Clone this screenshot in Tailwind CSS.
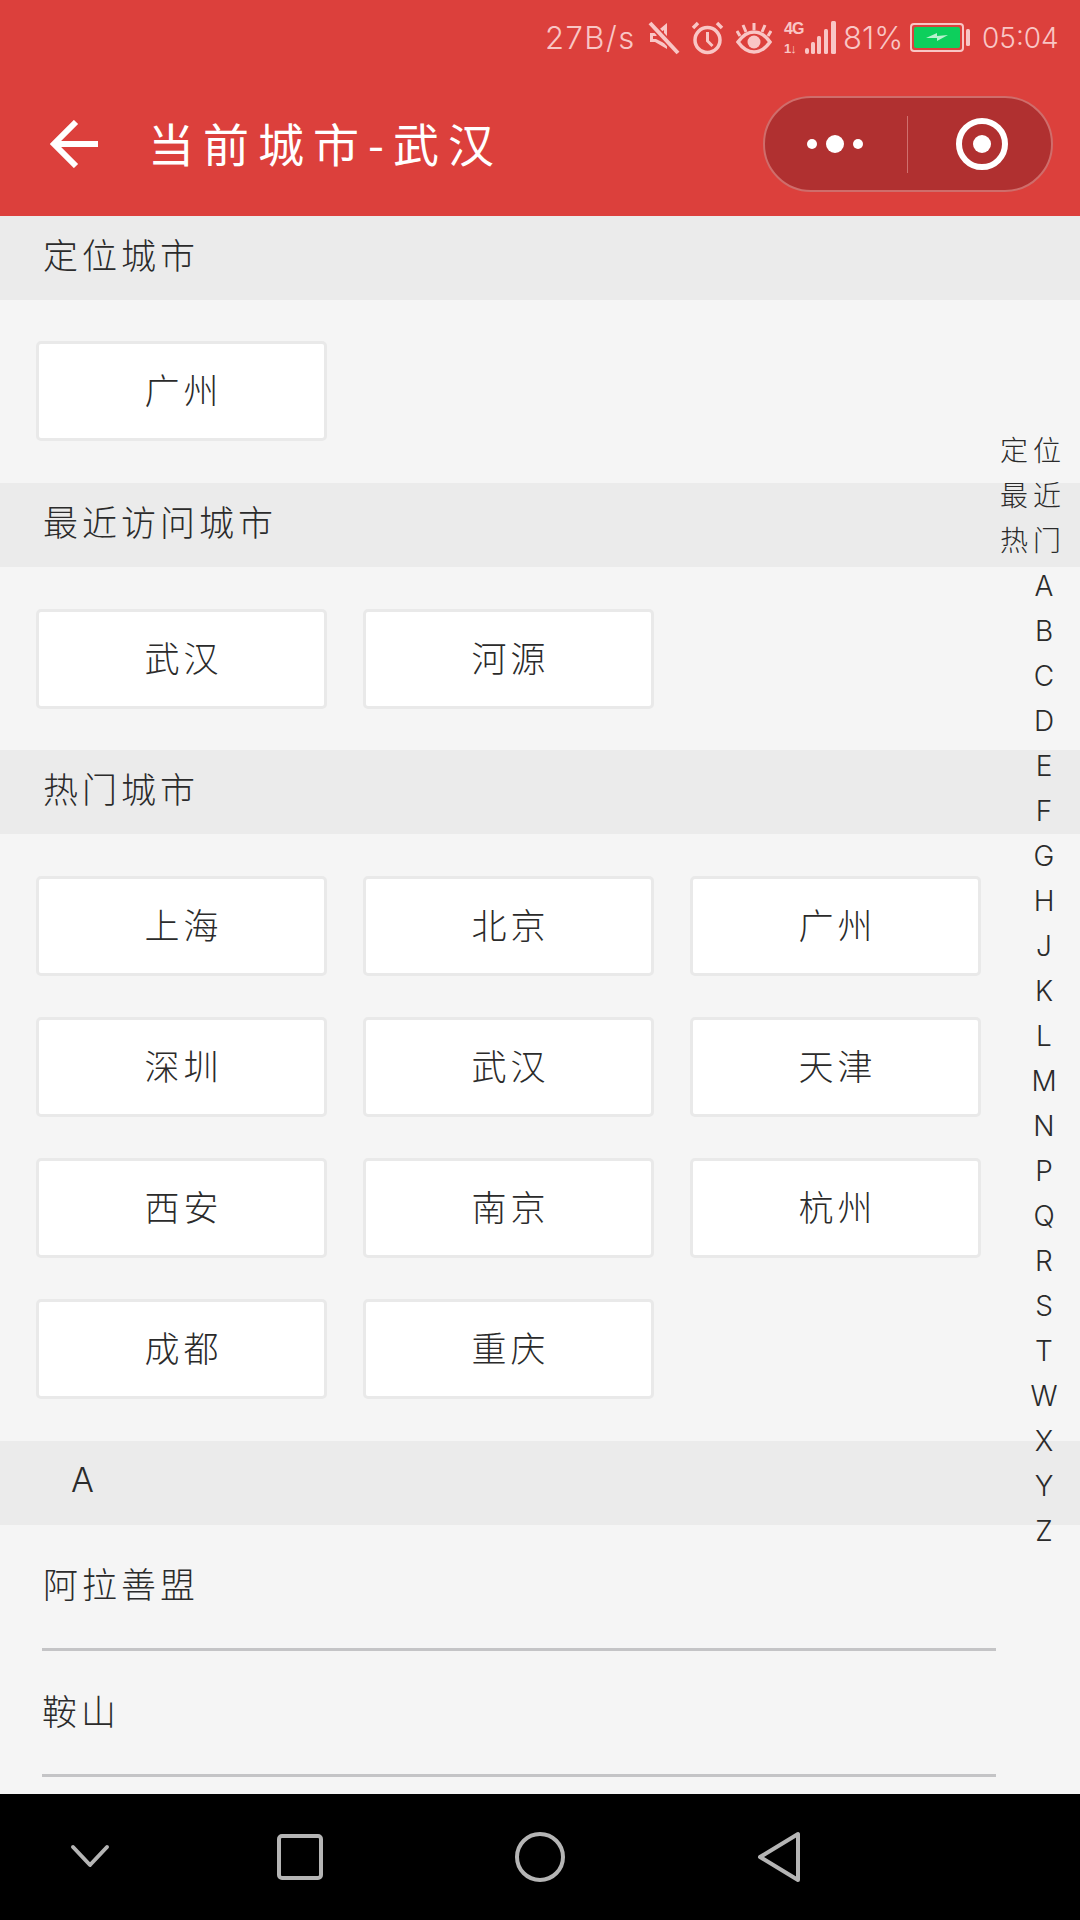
<!DOCTYPE html>
<html lang="zh">
<head>
<meta charset="utf-8">
<script src="https://cdn.jsdelivr.net/npm/@tailwindcss/browser@4"></script>
</head>
<body class="m-0">
<div class="relative w-[1080px] h-[1920px] overflow-hidden flex flex-col bg-[#f5f5f5] text-[#2b2b2b] font-['Noto_Sans_CJK_SC','Noto_Sans',sans-serif] font-light">
  <header class="h-[216px] shrink-0 bg-[#dc403c] flex flex-col">
    <div class="h-[72px] shrink-0 flex items-center pl-[545px] pt-[3px] text-[#f9c6c5] text-[30px] font-['Inter',sans-serif] font-light leading-none">
      <span class="w-[92px] text-[31px] tracking-[1.5px] whitespace-nowrap">27B/s</span>
      <svg class="ml-[11px] w-[32px] h-[34px]" viewBox="0 0 32 34" fill="none"><path d="M2 12h5L19 2v26L7 21H2z" fill="#f9c6c5"/><path d="M5 15h3l8-6v13l-8-4H5z" fill="#dc403c"/><path d="M1 1l30 32" stroke="#dc403c" stroke-width="7"/><path d="M2 2l28 30" stroke="#f9c6c5" stroke-width="4"/></svg>
      <svg class="ml-[11px] w-[33px] h-[34px]" viewBox="0 0 33 34" fill="none" stroke="#f9c6c5"><circle cx="16.500" cy="19" r="12.500" stroke-width="3.500"/><path d="M16.500 11v9l5 5" stroke-width="3"/><path d="M2 7l5-5M31 7l-5-5" stroke-width="3.500"/></svg>
      <svg class="ml-[12px] w-[36px] h-[34px]" viewBox="0 0 36 34" fill="none" stroke="#f9c6c5"><path d="M2 21c5-7 10-10 16-10s11 3 16 10c-5 7-10 10-16 10S7 28 2 21z" stroke-width="3.500"/><circle cx="18" cy="21" r="6.500" fill="#f9c6c5" stroke="none"/><path d="M18 9V2M10 11L7 4M26 11l3-7M4 15L1 10M32 15l3-5" stroke-width="3"/></svg>
      <div class="ml-[12px] w-[19px] h-[34px] flex flex-col justify-between text-[16px] font-bold leading-none font-['Liberation_Sans',sans-serif]">
        <span class="tracking-[-1px]">4G</span>
        <span class="tracking-[-1px] text-[13px] font-bold">1↓</span>
      </div>
      <svg class="w-[34px] h-[36px]" viewBox="0 0 34 36" fill="#f9c6c5"><rect x="2" y="28" width="4" height="6" rx="2"/><rect x="8" y="22" width="4" height="12" rx="1.500"/><rect x="14" y="16" width="4" height="18" rx="1.500"/><rect x="21" y="9" width="4" height="25" rx="1.500"/><rect x="28" y="1" width="5" height="33" rx="1.500"/></svg>
      <span class="ml-[6px] w-[67px] text-[31px]">81%</span>
      <svg class="w-[62px] h-[30px]" viewBox="0 0 62 30" fill="none"><rect x="1" y="1" width="52" height="27" rx="3" stroke="#f9c6c5" stroke-width="2"/><rect x="4" y="4" width="46" height="21" rx="2" fill="#0dcf5c"/><path d="M16 15l11-5v3l11-1-11 6v-3z" fill="#b8f2cf"/><rect x="56" y="6" width="4" height="17" rx="1.500" fill="#f9c6c5"/></svg>
      <span class="ml-[10px] text-[28px]">05:04</span>
    </div>
    <div class="flex-1 flex items-center pl-[50px] relative">
      <svg class="w-[48px] h-[48px] shrink-0" viewBox="0 0 48 48" fill="none" stroke="#fff" stroke-width="6"><path d="M48 24H4M26 2L4 24l22 22"/></svg>
      <h1 class="ml-[50px] pb-[4px] text-[46px] text-white font-normal tracking-[9px] leading-none whitespace-nowrap">当前城市-武汉</h1>
      <div class="ml-auto mr-[27px] w-[290px] h-[96px] rounded-full bg-[#b03030] border-2 border-[#cf6d6b] flex items-center relative">
        <div class="w-[142px] pr-[2px] flex items-center justify-center gap-[9px]">
          <span class="w-[10px] h-[10px] rounded-full bg-white"></span>
          <span class="w-[18px] h-[18px] rounded-full bg-white"></span>
          <span class="w-[10px] h-[10px] rounded-full bg-white"></span>
        </div>
        <span class="w-[1px] h-[57px] bg-[#d0706e]"></span>
        <div class="flex-1 flex items-center justify-center pl-[5px]">
          <span class="w-[52px] h-[52px] rounded-full border-[6px] border-white flex items-center justify-center"><span class="w-[18px] h-[18px] rounded-full bg-white"></span></span>
        </div>
      </div>
    </div>
  </header>

  <main class="flex-1 min-h-0 overflow-hidden">
    <h2 class="h-[84px] pb-[7px] bg-[#ebebeb] flex items-center pl-[43px] text-[35px] font-light tracking-[4px]">定位城市</h2>
    <div class="grid grid-cols-[291px_291px_291px] gap-x-[36px] gap-y-[41px] pl-[36px] pt-[41px] pb-[42px]">
      <div class="h-[100px] pb-[3px] pl-[4px] bg-white border-[3px] border-[#e9e9e9] rounded-[5px] flex items-center justify-center text-[35px] tracking-[4px]">广州</div>
    </div>
    <h2 class="h-[84px] pb-[7px] bg-[#ebebeb] flex items-center pl-[43px] text-[35px] font-light tracking-[4px]">最近访问城市</h2>
    <div class="grid grid-cols-[291px_291px_291px] gap-x-[36px] gap-y-[41px] pl-[36px] pt-[42px] pb-[41px]">
      <div class="h-[100px] pb-[3px] pl-[4px] bg-white border-[3px] border-[#e9e9e9] rounded-[5px] flex items-center justify-center text-[35px] tracking-[4px]">武汉</div>
      <div class="h-[100px] pb-[3px] pl-[4px] bg-white border-[3px] border-[#e9e9e9] rounded-[5px] flex items-center justify-center text-[35px] tracking-[4px]">河源</div>
    </div>
    <h2 class="h-[84px] pb-[7px] bg-[#ebebeb] flex items-center pl-[43px] text-[35px] font-light tracking-[4px]">热门城市</h2>
    <div class="grid grid-cols-[291px_291px_291px] gap-x-[36px] gap-y-[41px] pl-[36px] pt-[42px] pb-[42px]">
      <div class="h-[100px] pb-[3px] pl-[4px] bg-white border-[3px] border-[#e9e9e9] rounded-[5px] flex items-center justify-center text-[35px] tracking-[4px]">上海</div>
      <div class="h-[100px] pb-[3px] pl-[4px] bg-white border-[3px] border-[#e9e9e9] rounded-[5px] flex items-center justify-center text-[35px] tracking-[4px]">北京</div>
      <div class="h-[100px] pb-[3px] pl-[4px] bg-white border-[3px] border-[#e9e9e9] rounded-[5px] flex items-center justify-center text-[35px] tracking-[4px]">广州</div>
      <div class="h-[100px] pb-[3px] pl-[4px] bg-white border-[3px] border-[#e9e9e9] rounded-[5px] flex items-center justify-center text-[35px] tracking-[4px]">深圳</div>
      <div class="h-[100px] pb-[3px] pl-[4px] bg-white border-[3px] border-[#e9e9e9] rounded-[5px] flex items-center justify-center text-[35px] tracking-[4px]">武汉</div>
      <div class="h-[100px] pb-[3px] pl-[4px] bg-white border-[3px] border-[#e9e9e9] rounded-[5px] flex items-center justify-center text-[35px] tracking-[4px]">天津</div>
      <div class="h-[100px] pb-[3px] pl-[4px] bg-white border-[3px] border-[#e9e9e9] rounded-[5px] flex items-center justify-center text-[35px] tracking-[4px]">西安</div>
      <div class="h-[100px] pb-[3px] pl-[4px] bg-white border-[3px] border-[#e9e9e9] rounded-[5px] flex items-center justify-center text-[35px] tracking-[4px]">南京</div>
      <div class="h-[100px] pb-[3px] pl-[4px] bg-white border-[3px] border-[#e9e9e9] rounded-[5px] flex items-center justify-center text-[35px] tracking-[4px]">杭州</div>
      <div class="h-[100px] pb-[3px] pl-[4px] bg-white border-[3px] border-[#e9e9e9] rounded-[5px] flex items-center justify-center text-[35px] tracking-[4px]">成都</div>
      <div class="h-[100px] pb-[3px] pl-[4px] bg-white border-[3px] border-[#e9e9e9] rounded-[5px] flex items-center justify-center text-[35px] tracking-[4px]">重庆</div>
    </div>
    <h2 class="h-[84px] pb-[7px] bg-[#ebebeb] flex items-center pl-[71px] text-[34px] font-['Inter',sans-serif] font-light">A</h2>
    <ul class="w-[954px] ml-[42px]">
      <li class="h-[126px] pb-[6px] border-b-[3px] border-[#c4c4c6] flex items-center pl-[1px] text-[35px] tracking-[4px]">阿拉善盟</li>
      <li class="h-[126px] pb-[4px] border-b-[3px] border-[#c4c4c6] flex items-center text-[35px] tracking-[4px]">鞍山</li>
    </ul>
  </main>

  <nav class="h-[126px] shrink-0 bg-black relative">
    <svg class="absolute left-[70px] top-[50px] w-[40px] h-[24px]" viewBox="0 0 40 24" fill="none" stroke="#b5b5b5" stroke-width="4" stroke-linecap="round" stroke-linejoin="round"><path d="M3 3l17 18L37 3"/></svg>
    <svg class="absolute left-[277px] top-[40px] w-[46px] h-[46px]" viewBox="0 0 46 46" fill="none" stroke="#b5b5b5" stroke-width="4"><rect x="2" y="2" width="42" height="42" rx="3"/></svg>
    <svg class="absolute left-[515px] top-[38px] w-[50px] h-[50px]" viewBox="0 0 50 50" fill="none" stroke="#b5b5b5" stroke-width="4"><circle cx="25" cy="25" r="23"/></svg>
    <svg class="absolute left-[757px] top-[37px] w-[44px] h-[52px]" viewBox="0 0 44 52" fill="none" stroke="#b5b5b5" stroke-width="4" stroke-linejoin="round"><path d="M41 3v46L3 26z"/></svg>
  </nav>

  <aside class="absolute left-[980px] top-[427px] w-[128px] flex flex-col items-center text-[28px] leading-[45px] font-light">
    <span class="h-[45px] mr-[22px] tracking-[5px] whitespace-nowrap">定位</span>
    <span class="h-[45px] mr-[22px] tracking-[5px] whitespace-nowrap">最近</span>
    <span class="h-[45px] mr-[22px] tracking-[5px] whitespace-nowrap">热门</span>
    <span class="h-[45px] leading-[49px] font-['Inter',sans-serif]">A</span>
    <span class="h-[45px] leading-[49px] font-['Inter',sans-serif]">B</span>
    <span class="h-[45px] leading-[49px] font-['Inter',sans-serif]">C</span>
    <span class="h-[45px] leading-[49px] font-['Inter',sans-serif]">D</span>
    <span class="h-[45px] leading-[49px] font-['Inter',sans-serif]">E</span>
    <span class="h-[45px] leading-[49px] font-['Inter',sans-serif]">F</span>
    <span class="h-[45px] leading-[49px] font-['Inter',sans-serif]">G</span>
    <span class="h-[45px] leading-[49px] font-['Inter',sans-serif]">H</span>
    <span class="h-[45px] leading-[49px] font-['Inter',sans-serif]">J</span>
    <span class="h-[45px] leading-[49px] font-['Inter',sans-serif]">K</span>
    <span class="h-[45px] leading-[49px] font-['Inter',sans-serif]">L</span>
    <span class="h-[45px] leading-[49px] font-['Inter',sans-serif]">M</span>
    <span class="h-[45px] leading-[49px] font-['Inter',sans-serif]">N</span>
    <span class="h-[45px] leading-[49px] font-['Inter',sans-serif]">P</span>
    <span class="h-[45px] leading-[49px] font-['Inter',sans-serif]">Q</span>
    <span class="h-[45px] leading-[49px] font-['Inter',sans-serif]">R</span>
    <span class="h-[45px] leading-[49px] font-['Inter',sans-serif]">S</span>
    <span class="h-[45px] leading-[49px] font-['Inter',sans-serif]">T</span>
    <span class="h-[45px] leading-[49px] font-['Inter',sans-serif]">W</span>
    <span class="h-[45px] leading-[49px] font-['Inter',sans-serif]">X</span>
    <span class="h-[45px] leading-[49px] font-['Inter',sans-serif]">Y</span>
    <span class="h-[45px] leading-[49px] font-['Inter',sans-serif]">Z</span>
  </aside>
</div>
</body>
</html>
